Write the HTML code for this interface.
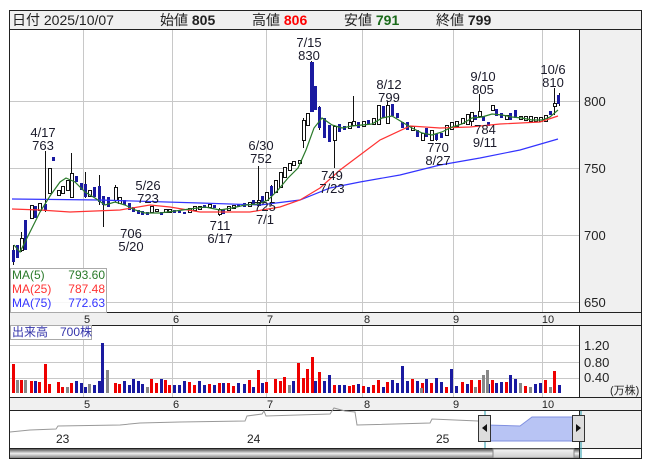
<!DOCTYPE html>
<html><head><meta charset="utf-8">
<style>
html,body{margin:0;padding:0;background:#fff;width:653px;height:470px;overflow:hidden}
svg{display:block;font-family:"Liberation Sans","Noto Sans CJK JP",sans-serif}
</style></head><body>
<svg width="653" height="470" xmlns="http://www.w3.org/2000/svg">
<rect x="0" y="0" width="653" height="470" fill="#fff"/>
<rect x="9.5" y="10.5" width="632" height="19" fill="#f0f0f0" stroke="#222"/>
<text x="12" y="25" font-size="14" fill="#222">日付 2025/10/07</text>
<text x="160" y="25" font-size="14" fill="#222">始値 <tspan font-weight="bold">805</tspan></text>
<text x="252" y="25" font-size="14" fill="#222">高値 <tspan font-weight="bold" fill="#f00">806</tspan></text>
<text x="344" y="25" font-size="14" fill="#222">安値 <tspan font-weight="bold" fill="#1a6a1a">791</tspan></text>
<text x="436" y="25" font-size="14" fill="#222">終値 <tspan font-weight="bold">799</tspan></text>
<rect x="579.5" y="29.5" width="62" height="283" fill="#f0f0f0" stroke="#222"/>
<rect x="579.5" y="325.5" width="62" height="72" fill="#f0f0f0" stroke="#222"/>
<rect x="579.5" y="410.5" width="62" height="38" fill="#f0f0f0" stroke="#222"/>
<rect x="9.5" y="312.5" width="632" height="13" fill="#f0f0f0" stroke="#222"/>
<rect x="9.5" y="397.5" width="632" height="13" fill="#f0f0f0" stroke="#222"/>
<g font-size="11" fill="#222" text-anchor="middle">
<text x="87" y="323">5</text><text x="176" y="323">6</text><text x="270" y="323">7</text><text x="367" y="323">8</text><text x="456" y="323">9</text><text x="548" y="323">10</text>
<text x="87" y="408">5</text><text x="176" y="408">6</text><text x="270" y="408">7</text><text x="367" y="408">8</text><text x="456" y="408">9</text><text x="548" y="408">10</text>
</g>
<path d="M83.5 30V312M172.5 30V312M266.5 30V312M362.5 30V312M453.5 30V312M542.5 30V312M83.5 326V397M172.5 326V397M266.5 326V397M362.5 326V397M453.5 326V397M542.5 326V397M10 101.5H579M10 168.5H579M10 235.5H579M10 302.5H579M10 345.5H579M10 362.5H579M10 378.5H579" stroke="#c8c8c8" fill="none"/>
<g font-size="13" fill="#222">
<text x="584" y="106">800</text><text x="584" y="173">750</text><text x="584" y="240">700</text><text x="584" y="307">650</text>
<text x="584" y="350">1.20</text><text x="584" y="367">0.80</text><text x="584" y="382">0.40</text>
<text x="610" y="394" font-size="11">(万株)</text>
</g>
<!-- volume -->
<path fill="#e00" d="M12 393v-29h3v29zM20 393v-13h3v13zM30 393v-12h3v12zM38 393v-11h3v11zM44 393v-29h3v29zM48 393v-9h3v9zM57 393v-11h3v11zM61 393v-6h3v6zM70 393v-10h3v10zM114 393v-10h3v10zM118 393v-9h3v9zM150 393v-14h3v14zM155 393v-10h3v10zM164 393v-13h3v13zM168 393v-8h3v8zM188 393v-11h3v11zM193 393v-8h3v8zM208 393v-9h3v9zM218 393v-10h3v10zM227 393v-10h3v10zM232 393v-7h3v7zM248 393v-13h3v13zM257 393v-23h3v23zM265 393v-11h3v11zM274 393v-14h3v14zM279 393v-12h3v12zM283 393v-16h3v16zM297 393v-30h3v30zM302 393v-15h3v15zM306 393v-24h3v24zM311 393v-36h3v36zM318 393v-21h3v21zM333 393v-8h3v8zM348 393v-7h3v7zM352 393v-8h3v8zM362 393v-7h3v7zM372 393v-8h3v8zM377 393v-13h3v13zM386 393v-11h3v11zM411 393v-14h3v14zM421 393v-10h3v10zM430 393v-10h3v10zM445 393v-6h3v6zM461 393v-11h3v11zM470 393v-13h3v13zM478 393v-13h3v13zM491 393v-13h3v13zM505 393v-11h3v11zM524 393v-7h3v7zM544 393v-13h3v13zM553 393v-22h3v22z"/>
<path fill="#1a1aa0" d="M34 393v-12h3v12zM75 393v-12h3v12zM80 393v-10h3v10zM84 393v-6h3v6zM93 393v-8h3v8zM98 393v-12h3v12zM101 393v-50h3v50zM123 393v-12h3v12zM128 393v-8h3v8zM132 393v-14h3v14zM137 393v-12h3v12zM141 393v-9h3v9zM160 393v-14h3v14zM173 393v-8h3v8zM178 393v-8h3v8zM183 393v-12h3v12zM198 393v-12h3v12zM203 393v-8h3v8zM213 393v-8h3v8zM222 393v-10h3v10zM237 393v-10h3v10zM243 393v-9h3v9zM252 393v-6h3v6zM261 393v-10h3v10zM292 393v-12h3v12zM314 393v-12h3v12zM323 393v-12h3v12zM328 393v-18h3v18zM338 393v-8h3v8zM343 393v-8h3v8zM357 393v-9h3v9zM367 393v-6h3v6zM382 393v-6h3v6zM391 393v-13h3v13zM396 393v-10h3v10zM401 393v-27h3v27zM406 393v-12h3v12zM416 393v-12h3v12zM425 393v-14h3v14zM435 393v-15h3v15zM440 393v-11h3v11zM450 393v-24h3v24zM455 393v-7h3v7zM466 393v-9h3v9zM487 393v-9h3v9zM495 393v-10h3v10zM500 393v-11h3v11zM509 393v-18h3v18zM514 393v-14h3v14zM534 393v-9h3v9zM539 393v-10h3v10zM558 393v-8h3v8z"/>
<path fill="#888" d="M16 393v-13h3v13zM24 393v-13h3v13zM66 393v-6h3v6zM88 393v-9h3v9zM106 393v-23h3v23zM146 393v-6h3v6zM288 393v-8h3v8zM420 393v-5h3v5zM474 393v-6h3v6zM482 393v-18h3v18zM486 393v-23h3v23zM519 393v-10h3v10zM529 393v-6h3v6zM549 393v-6h3v6z"/>
<!-- wicks -->
<path stroke="#111" fill="none" d="M13.5 245V265M21.5 232V252M45.5 151V212M71.5 153V197M85.5 172V198M99.5 175V205M103.5 196V227M115.5 185V202M219.5 208V216M258.5 166V207M271.5 185V205M303.5 118V148M311.5 61V112M319.5 106V130M334.5 125V168M353.5 96V125M387.5 101V123M436.5 134V141M471.5 112V126M479.5 94V118M554.5 88V115M559.5 93V106"/>
<!-- blue bodies -->
<path fill="#1a1aa0" d="M12 250h3v12h-3zM16 245h3v13h-3zM24 220h3v30h-3zM34 206h3v12h-3zM44 204h3v7h-3zM52 157h3v4h-3zM75 176h3v6h-3zM80 183h3v7h-3zM84 184h3v13h-3zM93 187h3v10h-3zM98 186h3v16h-3zM102 196h3v9h-3zM107 197h3v10h-3zM123 200h3v5h-3zM128 203h3v7h-3zM132 207h3v5h-3zM137 210h3v4h-3zM141 211h3v4h-3zM146 212h3v3h-3zM160 212h3v3h-3zM173 210h3v3h-3zM178 211h3v2h-3zM183 212h3v2h-3zM203 205h3v3h-3zM213 205h3v3h-3zM222 209h3v5h-3zM237 204h3v3h-3zM243 203h3v4h-3zM252 200h3v4h-3zM261 196h3v7h-3zM270 186h3v10h-3zM310 62h4v50h-4zM314 86h3v24h-3zM318 107h3v21h-3zM323 118h3v20h-3zM328 125h3v17h-3zM338 124h3v8h-3zM343 126h3v4h-3zM357 122h3v6h-3zM367 120h3v4h-3zM382 106h3v12h-3zM391 104h3v12h-3zM396 113h3v5h-3zM401 122h3v6h-3zM406 122h3v8h-3zM416 130h3v7h-3zM425 128h3v9h-3zM435 134h3v6h-3zM440 133h3v5h-3zM474 115h3v5h-3zM482 116h3v5h-3zM487 122h3v4h-3zM495 109h3v7h-3zM500 113h3v5h-3zM509 113h3v7h-3zM514 110h3v8h-3zM549 111h3v4h-3zM557 95h3v9h-3z"/>
<!-- white bodies -->
<path fill="#fff" stroke="#111" d="M20.5 238.5h3v12h-3zM30.5 205.5h3v13h-3zM38.5 203.5h3v7h-3zM48.5 168.5h3v25h-3zM57.5 190.5h3v5h-3zM61.5 186.5h3v7h-3zM66.5 180.5h3v10h-3zM70.5 173.5h3v24h-3zM88.5 190.5h3v6h-3zM114.5 187.5h3v13h-3zM118.5 197.5h3v6h-3zM150.5 206.5h3v6h-3zM155.5 209.5h3v2h-3zM164.5 209.5h3v3h-3zM168.5 209.5h3v3h-3zM188.5 208.5h3v4h-3zM193.5 206.5h3v4h-3zM198.5 206.5h3v3h-3zM208.5 204.5h3v3h-3zM218.5 209.5h3v5h-3zM227.5 206.5h3v4h-3zM232.5 205.5h3v3h-3zM248.5 202.5h3v4h-3zM257.5 200.5h3v5h-3zM265.5 192.5h3v8h-3zM274.5 180.5h3v12h-3zM279.5 172.5h3v15h-3zM283.5 167.5h3v10h-3zM288.5 163.5h3v7h-3zM292.5 161.5h3v4h-3zM298.5 160.5h3v3h-3zM302.5 120.5h3v20h-3zM306.5 113.5h3v12h-3zM333.5 126.5h3v14h-3zM348.5 122.5h3v6h-3zM352.5 121.5h3v4h-3zM362.5 121.5h3v5h-3zM372.5 118.5h3v6h-3zM377.5 105.5h3v19h-3zM386.5 105.5h3v18h-3zM411.5 126.5h3v4h-3zM421.5 133.5h3v7h-3zM430.5 130.5h3v10h-3zM445.5 125.5h3v10h-3zM450.5 122.5h3v7h-3zM455.5 121.5h3v5h-3zM461.5 118.5h3v5h-3zM466.5 114.5h3v10h-3zM470.5 112.5h3v9h-3zM478.5 111.5h3v5h-3zM491.5 105.5h3v5h-3zM505.5 115.5h3v4h-3zM519.5 116.5h3v3h-3zM524.5 116.5h3v4h-3zM529.5 116.5h3v5h-3zM534.5 117.5h3v4h-3zM539.5 117.5h3v4h-3zM544.5 115.5h3v6h-3zM553.5 103.5h3v3h-3z"/>
<!-- MAs -->
<polyline fill="none" stroke="#33f" stroke-width="1.2" points="12,199 100,200 200,203 260,205 300,200 330,188 360,182 400,175 440,165 480,158 520,150 558,139"/>
<polyline fill="none" stroke="#f33" stroke-width="1.2" points="12,209 40,210 70,212 120,210 150,205 170,207 200,212 250,212 280,207 300,200 320,188 340,170 380,140 410,126 440,128 470,127 500,124 540,122 558,116"/>
<polyline fill="none" stroke="#2a7a2a" stroke-width="1.2" points="14,245 20,252 30,232 40,212 50,196 60,182 66,178 75,182 85,192 95,198 105,205 115,202 125,205 135,210 145,213 160,213 175,211 190,209 205,207 220,210 232,208 245,205 258,204 268,200 278,190 288,178 298,168 306,150 314,128 322,118 332,125 342,128 352,126 362,125 372,124 382,118 392,116 402,122 412,128 422,133 432,135 442,132 452,127 462,124 472,118 482,117 492,114 502,115 512,117 522,118 532,120 542,120 550,117 558,110"/>
<g font-size="13" fill="#1a1a2a" text-anchor="middle">
<text x="43" y="137">4/17</text><text x="43" y="150">763</text>
<text x="148" y="190">5/26</text><text x="148" y="203">723</text>
<text x="131" y="238">706</text><text x="131" y="251">5/20</text>
<text x="220" y="230">711</text><text x="220" y="243">6/17</text>
<text x="261" y="150">6/30</text><text x="261" y="163">752</text>
<text x="265" y="211">725</text><text x="265" y="224">7/1</text>
<text x="309" y="47">7/15</text><text x="309" y="60">830</text>
<text x="332" y="180">749</text><text x="332" y="193">7/23</text>
<text x="389" y="89">8/12</text><text x="389" y="102">799</text>
<text x="438" y="152">770</text><text x="438" y="165">8/27</text>
<text x="483" y="81">9/10</text><text x="483" y="94">805</text>
<text x="485" y="134">784</text><text x="485" y="147">9/11</text>
<text x="553" y="74">10/6</text><text x="553" y="87">810</text>
</g>
<rect x="10.5" y="268.5" width="96" height="44" fill="#fff" fill-opacity="0.85" stroke="#aaa"/>
<g font-size="12">
<text x="12" y="279" fill="#2a7a2a">MA(5)</text><text x="105" y="279" fill="#2a7a2a" text-anchor="end">793.60</text>
<text x="12" y="293" fill="#f33">MA(25)</text><text x="105" y="293" fill="#f33" text-anchor="end">787.48</text>
<text x="12" y="307" fill="#33f">MA(75)</text><text x="105" y="307" fill="#33f" text-anchor="end">772.63</text>
</g>
<rect x="10.5" y="325.5" width="81" height="14" fill="#fff" stroke="#aaa"/>
<text x="12" y="336" font-size="12" fill="#33a">出来高　700株</text>
<path d="M10 432 L30 430 L56 429 L58 426 L120 425 L140 423 L180 422 L245 421 L247 416 L262 414 L264 411 L266 416 L330 414 L334 408 L345 411 L355 412 L357 425 L430 423 L432 419 L478 421" fill="none" stroke="#999"/>
<path d="M487 441 L487 425 L520 426 L528 420 L532 417 L575 417 L575 441 Z" fill="#b8c4f4" stroke="#8090e0"/>
<g font-size="12" fill="#222"><text x="56" y="443">23</text><text x="247" y="443">24</text><text x="436" y="443">25</text></g>
<line x1="485" y1="411" x2="485" y2="459" stroke="#29a"/><line x1="581" y1="411" x2="581" y2="459" stroke="#29a"/>
<rect x="478.5" y="415.5" width="12" height="26" fill="#ddd" stroke="#333"/><path d="M482 428 L487 424 L487 432Z" fill="#111"/>
<rect x="572.5" y="415.5" width="12" height="26" fill="#ddd" stroke="#333"/><path d="M581 428 L576 424 L576 432Z" fill="#111"/>
<defs><linearGradient id="gs" x1="0" y1="0" x2="0" y2="1"><stop offset="0" stop-color="#444"/><stop offset="0.5" stop-color="#eee"/><stop offset="1" stop-color="#777"/></linearGradient>
<linearGradient id="gt" x1="0" y1="0" x2="0" y2="1"><stop offset="0" stop-color="#f4f4f4"/><stop offset="1" stop-color="#ccc"/></linearGradient></defs>
<rect x="9.5" y="448.5" width="570" height="10" fill="url(#gs)" stroke="#222"/>
<rect x="493" y="449" width="81" height="9" fill="url(#gt)" stroke="#888"/>
<rect x="9.5" y="29.5" width="632" height="429" fill="none" stroke="#222"/>
</svg>
</body></html>
